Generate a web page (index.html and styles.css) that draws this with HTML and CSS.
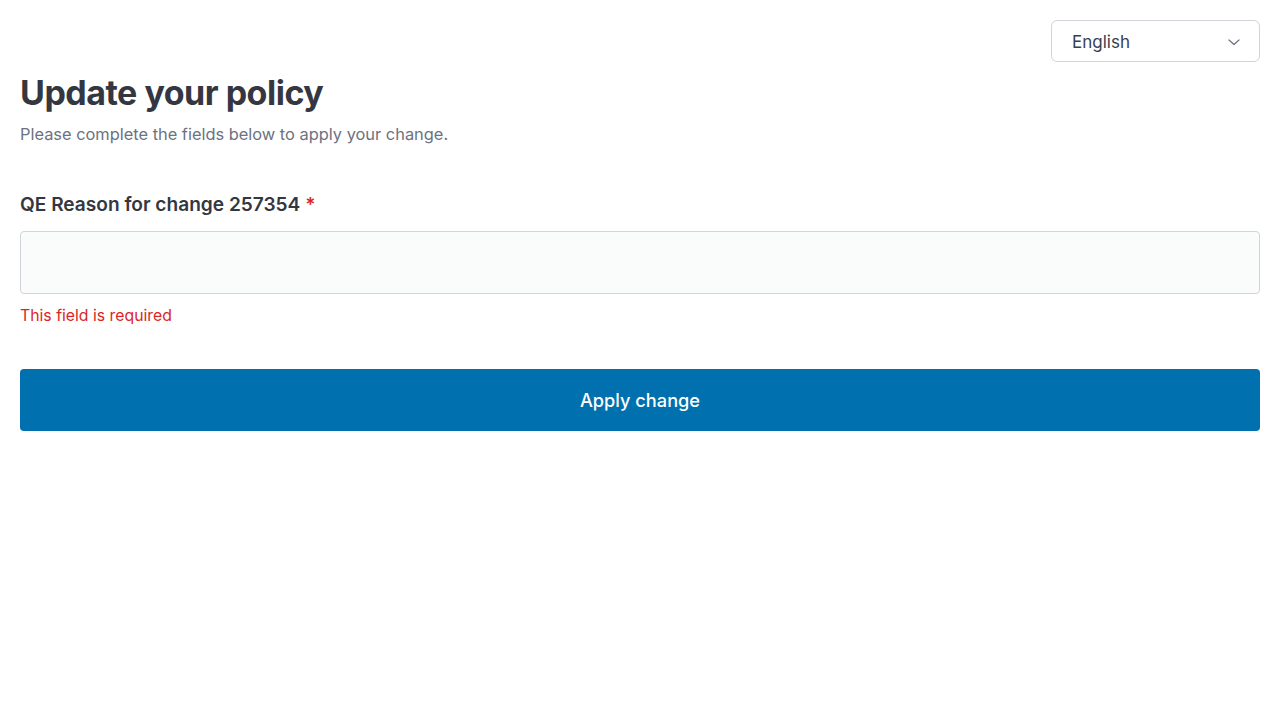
FILE: index.html
```html
<!DOCTYPE html>
<html lang="en">
<head>
<meta charset="utf-8">
<title>Update your policy</title>
<link rel="stylesheet" href="styles.css">
</head>
<body>
<div class="page">
  <div class="topbar">
    <div class="lang-select">
      <span>English</span>
      <svg class="chev" width="14" height="14" viewBox="0 0 14 14" fill="none"><path d="M2 5 L7 9.5 L12 5" stroke="#6b7280" stroke-width="1.2" stroke-linecap="round" stroke-linejoin="round"/></svg>
    </div>
  </div>
  <h1 class="title">Update your policy</h1>
  <p class="subtitle">Please complete the fields below to apply your change.</p>
  <form class="form">
    <label class="label">QE Reason for change 257354 <span class="req">*</span></label>
    <input class="input" type="text">
    <p class="error">This field is required</p>
    <button class="btn" type="button">Apply change</button>
  </form>
</div>
</body>
</html>
```
FILE: styles.css
```css
html, body { margin: 0; padding: 0; background: #fff; }
body { font-family: Inter, "Noto Sans", sans-serif; color: #374151; }
.page { padding: 20px; }
.topbar { display: flex; justify-content: flex-end; height: 42px; margin-bottom: -42px; }
.lang-select {
  box-sizing: border-box; width: 209px; height: 42px;
  border: 1px solid #d1d5db; border-radius: 6px;
  display: flex; align-items: center; justify-content: space-between;
  padding: 1px 18px 0 20px; font-size: 17px; color: #374151;
}
.title { margin: 52px 0 0; font-size: 34px; line-height: 42px; font-weight: 700; color: #343741; letter-spacing: -0.5px; }
.subtitle { margin: 8px 0 0; font-size: 16.4px; line-height: 24px; color: #6b7280; }
.form { margin-top: 45px; display: flex; flex-direction: column; }
.label { font-size: 19.1px; line-height: 26px; font-weight: 600; color: #343741; }
.req { color: #dc2626; }
.input {
  box-sizing: border-box; margin-top: 14px; height: 63px; width: 100%;
  background: #fafbfb; border: 1px solid #d1d5db; border-radius: 4px;
  font: inherit; padding: 0 16px; outline: none;
}
.error { margin: 12px 0 0; font-size: 15.8px; line-height: 20px; color: #dc2626; }
.btn {
  margin-top: 43px; height: 62px; width: 100%; border: 0; border-radius: 4px;
  background: #0070ae; color: #fff; font-family: inherit; font-size: 18.2px; font-weight: 500;
}
```
